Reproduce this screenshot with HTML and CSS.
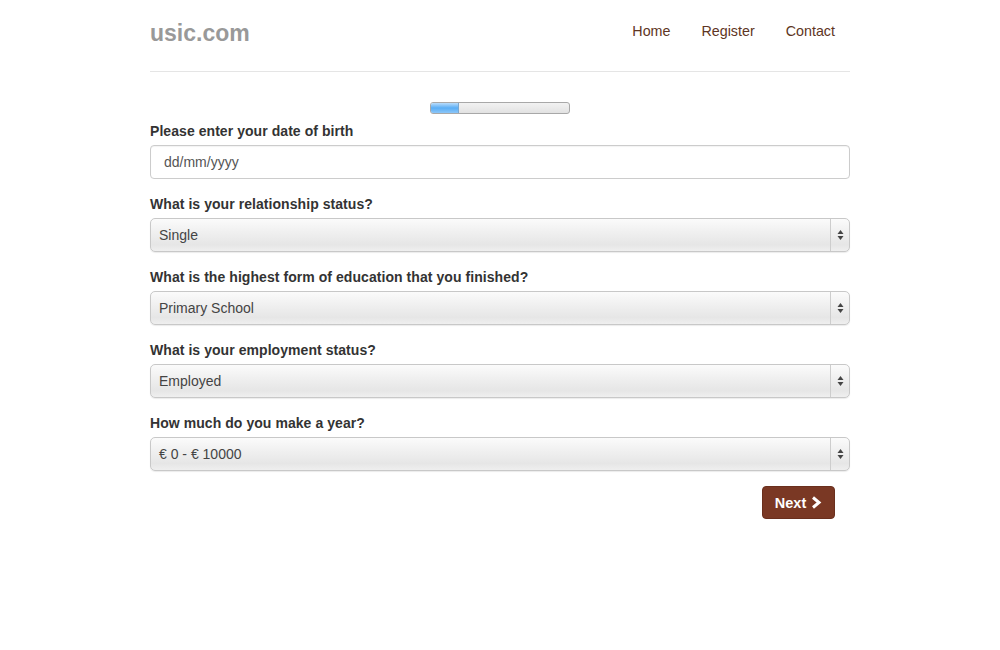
FILE: index.html
```html
<!DOCTYPE html>
<html>
<head>
<meta charset="utf-8">
<link rel="stylesheet" href="styles.css">
</head>
<body>
<div class="container">
  <header class="header">
    <div class="brand">usic.com</div>
    <nav class="nav">
      <a href="#">Home</a>
      <a href="#">Register</a>
      <a href="#">Contact</a>
    </nav>
  </header>
  <div class="progress"><div class="progress-fill"></div></div>
  <form class="form">
    <label class="label">Please enter your date of birth</label>
    <input class="input" type="text" placeholder="dd/mm/yyyy">
    <label class="label">What is your relationship status?</label>
    <div class="select"><span class="select-text">Single</span><span class="select-arrow"><svg width="7" height="12" viewBox="0 0 7 12"><path d="M3.5 1 L6.5 5 H0.5 Z M3.5 11 L6.5 7 H0.5 Z" fill="#444"/></svg></span></div>
    <label class="label">What is the highest form of education that you finished?</label>
    <div class="select"><span class="select-text">Primary School</span><span class="select-arrow"><svg width="7" height="12" viewBox="0 0 7 12"><path d="M3.5 1 L6.5 5 H0.5 Z M3.5 11 L6.5 7 H0.5 Z" fill="#444"/></svg></span></div>
    <label class="label">What is your employment status?</label>
    <div class="select"><span class="select-text">Employed</span><span class="select-arrow"><svg width="7" height="12" viewBox="0 0 7 12"><path d="M3.5 1 L6.5 5 H0.5 Z M3.5 11 L6.5 7 H0.5 Z" fill="#444"/></svg></span></div>
    <label class="label">How much do you make a year?</label>
    <div class="select"><span class="select-text">€ 0 - € 10000</span><span class="select-arrow"><svg width="7" height="12" viewBox="0 0 7 12"><path d="M3.5 1 L6.5 5 H0.5 Z M3.5 11 L6.5 7 H0.5 Z" fill="#444"/></svg></span></div>
    <div class="actions">
      <button class="btn" type="button">Next <svg width="11" height="13" viewBox="0 0 11 13"><path d="M2 1.5 L8 6.5 L2 11.5" fill="none" stroke="#fff" stroke-width="3" stroke-linejoin="miter"/></svg></button>
    </div>
  </form>
</div>
</body>
</html>
```
FILE: styles.css
```css
* { box-sizing: border-box; }
body {
  margin: 0;
  background: #fff;
  font-family: "Liberation Sans", Arial, sans-serif;
  color: #333;
}
.container {
  width: 700px;
  margin: 0 auto;
}
.header {
  display: flex;
  justify-content: space-between;
  align-items: flex-start;
  height: 72px;
  border-bottom: 1px solid #e5e5e5;
}
.brand {
  font-size: 23px;
  font-weight: bold;
  color: #999;
  padding-top: 20px;
}
.nav {
  display: flex;
  padding-top: 22px;
  padding-right: 15px;
}
.nav a {
  font-size: 14.3px;
  color: #5e3523;
  text-decoration: none;
  margin-left: 31px;
  line-height: 18px;
}
.progress {
  width: 140px;
  height: 12px;
  margin: 30px auto 7px;
  border: 1px solid #a8a8a8;
  border-radius: 3px;
  background: linear-gradient(#f2f2f2, #e2e2e2);
  overflow: hidden;
}
.progress-fill {
  width: 28px;
  height: 100%;
  background: linear-gradient(#b9dcfb, #5aaef5 50%, #8cc6f8);
  border-right: 1px solid #7aa8d0;
}
.form {
  display: flex;
  flex-direction: column;
}
.label {
  font-size: 14px;
  font-weight: bold;
  line-height: 20px;
  color: #333;
  margin-bottom: 4px;
  letter-spacing: 0.06px;
}
.input {
  height: 34px;
  border: 1px solid #ccc;
  border-radius: 4px;
  padding: 0 13px;
  font-family: "Liberation Sans", Arial, sans-serif;
  font-size: 14px;
  color: #555;
  margin-bottom: 15px;
  box-shadow: inset 0 1px 1px rgba(0,0,0,0.05);
}
.input::placeholder { color: #555; }
.select {
  display: flex;
  align-items: stretch;
  height: 34px;
  border: 1px solid #c8c8c8;
  border-radius: 5px;
  background: linear-gradient(#fbfbfb, #f0f0f0 40%, #e6e6e6 80%, #efefef);
  box-shadow: 0 1px 1px rgba(0,0,0,0.08);
  margin-bottom: 15px;
}
.select-text {
  flex: 1;
  display: flex;
  align-items: center;
  padding-left: 8px;
  font-size: 14px;
  color: #444;
}
.select-arrow {
  width: 19px;
  display: flex;
  align-items: center;
  justify-content: center;
  border-left: 1px solid #cdcdcd;
}
.actions {
  display: flex;
  justify-content: flex-end;
  padding-right: 15px;
}
.btn {
  display: flex;
  align-items: center;
  gap: 5px;
  height: 33px;
  width: 73px;
  justify-content: center;
  background: #7a3824;
  border: 1px solid #6a2f1d;
  border-radius: 4px;
  color: #fff;
  font-family: "Liberation Sans", Arial, sans-serif;
  font-size: 14.5px;
  font-weight: bold;
  padding: 0;
}
```
